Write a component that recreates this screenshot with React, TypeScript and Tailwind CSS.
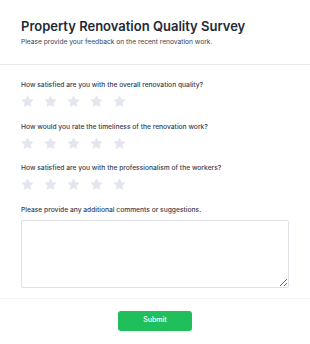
import { Star } from 'lucide-react';

const questions = [
  'How satisfied are you with the overall renovation quality?',
  'How would you rate the timeliness of the renovation work?',
  'How satisfied are you with the professionalism of the workers?',
];

function StarRow() {
  return (
    <div className="flex items-center gap-[10px] mt-[5px]">
      {[0, 1, 2, 3, 4].map((i) => (
        <Star key={i} className="w-[13px] h-[13px] text-[#e3e6ee] fill-[#e3e6ee]" strokeWidth={1} />
      ))}
    </div>
  );
}

export default function App() {
  return (
    <div className="w-[310px] h-[344px] bg-white overflow-hidden" style={{ fontFamily: 'Inter, "Noto Sans", sans-serif' }}>
      <div className="px-[21px] pt-[16px] pb-[17px] border-b border-[#e8e9ec]">
        <h1 className="text-[13px] leading-[20px] font-semibold text-[#1f2937] whitespace-nowrap">Property Renovation Quality Survey</h1>
        <p className="text-[6.65px] leading-[10px] mt-[1px] text-[#374151]">Please provide your feedback on the recent renovation work.</p>
      </div>

      <div className="px-[21px] pt-[15px] pb-[10px] border-b border-[#f3f4f6]">
        {questions.map((q) => (
          <div key={q} className="mb-[13.5px]">
            <p className="text-[6.7px] leading-[10px] font-medium text-[#374151]">{q}</p>
            <StarRow />
          </div>
        ))}
        <p className="text-[6.7px] leading-[10px] font-medium text-[#374151]">Please provide any additional comments or suggestions.</p>
        <textarea className="mt-[5px] w-full h-[68px] border border-[#dfe1e6] rounded-[2px] resize-y block" />
      </div>

      <div className="flex justify-center pt-[12px]">
        <button className="w-[74px] h-[20px] rounded-[3px] bg-[#1fbf5c] text-white text-[7px] font-medium">Submit</button>
      </div>
    </div>
  );
}
